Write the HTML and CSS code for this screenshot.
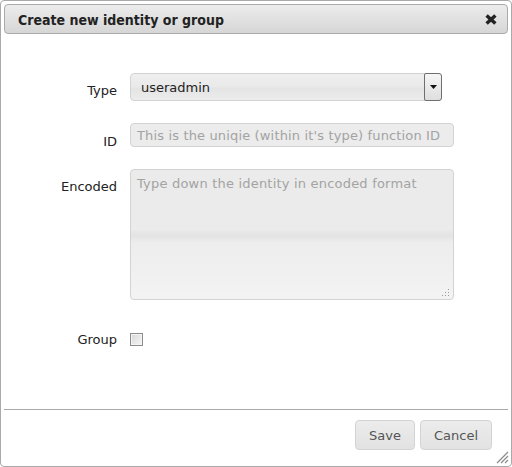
FILE: index.html
```html
<!DOCTYPE html>
<html>
<head>
<meta charset="utf-8">
<link rel="stylesheet" href="styles.css">
</head>
<body>
<div class="dialog">
  <div class="titlebar">
    <span class="title">Create new identity or group</span>
    <span class="close">
      <svg width="12" height="11" viewBox="0 0 12 11"><path d="M1.6 1.4 L10.4 9.6 M10.4 1.4 L1.6 9.6" stroke="#222" stroke-width="3.4" fill="none"/></svg>
    </span>
  </div>
  <div class="content">
    <form class="form">
      <label class="lbl">Type</label>
      <div class="select-wrap">
        <select class="select"><option>useradmin</option></select>
        <span class="select-arrow"><svg width="7" height="4" viewBox="0 0 7 4"><path d="M0 0 H7 L3.5 4 Z" fill="#111"/></svg></span>
      </div>
      <label class="lbl lbl-id">ID</label>
      <input class="field" type="text" placeholder="This is the uniqie (within it's type) function ID">
      <label class="lbl">Encoded</label>
      <div class="area-wrap">
        <textarea class="area" placeholder="Type down the identity in encoded format"></textarea>
        <svg class="grip" width="8" height="8" viewBox="0 0 8 8">
          <rect x="6" y="0" width="1" height="1" fill="#9a9a9a"/>
          <rect x="3" y="3" width="1" height="1" fill="#9a9a9a"/>
          <rect x="6" y="3" width="1" height="1" fill="#9a9a9a"/>
          <rect x="0" y="6" width="1" height="1" fill="#9a9a9a"/>
          <rect x="3" y="6" width="1" height="1" fill="#9a9a9a"/>
          <rect x="6" y="6" width="1" height="1" fill="#9a9a9a"/>
        </svg>
      </div>
      <label class="lbl lbl-group">Group</label>
      <span class="check"></span>
    </form>
  </div>
  <div class="buttonpane">
    <button class="btn" type="button">Save</button>
    <button class="btn" type="button">Cancel</button>
  </div>
  <svg class="resize" width="14" height="14" viewBox="0 0 14 14">
    <path d="M13 2 L2 13 M13 6 L6 13 M13 10 L10 13" stroke="#8a8a8a" stroke-width="1.2" fill="none"/>
  </svg>
</div>
</body>
</html>
```
FILE: styles.css
```css
* { box-sizing: border-box; }
html, body { margin: 0; padding: 0; background: #fff; }
body {
  font-family: "DejaVu Sans", Verdana, sans-serif;
  font-size: 13px;
  color: #222;
}
.dialog {
  position: relative;
  width: 512px;
  height: 467px;
  border: 1px solid #aaa;
  border-radius: 4px;
  padding: 3px;
  display: flex;
  flex-direction: column;
  background: #fff;
}
.titlebar {
  height: 30px;
  flex: 0 0 30px;
  border: 1px solid #aaa;
  border-radius: 4px;
  background: linear-gradient(#ececec, #d6d6d6);
  display: flex;
  align-items: center;
  justify-content: space-between;
  padding: 0 10px 0 13px;
}
.title {
  font-family: "DejaVu Sans Condensed", "DejaVu Sans", sans-serif;
  font-weight: bold;
  font-size: 14px;
  line-height: 16px;
  color: #222;
  padding-top: 1px;
}
.close { display: flex; width: 12px; height: 11px; }
.content { flex: 1 1 auto; }
.form {
  display: grid;
  grid-template-columns: 113px auto;
  column-gap: 13px;
  row-gap: 22px;
  padding-top: 39px;
  align-items: start;
  justify-items: start;
  margin: 0;
}
.lbl {
  justify-self: end;
  line-height: 16px;
  padding-top: 10px;
  margin-bottom: -30px;
  color: #222;
}
.lbl-id { padding-top: 11px; }
.select-wrap { position: relative; width: 312px; height: 28px; }
.select {
  appearance: none;
  -webkit-appearance: none;
  width: 312px;
  height: 28px;
  border: 1px solid #d3d3d3;
  border-radius: 4px;
  background: linear-gradient(#efefef, #e9e9e9 50%, #e4e4e4 55%, #ececec);
  font: 13px "DejaVu Sans", Verdana, sans-serif;
  color: #222;
  padding: 0 0 0 10px;
  margin: 0;
}
.select-arrow {
  position: absolute;
  right: 0;
  top: 0;
  width: 18px;
  height: 28px;
  border: 1px solid #6f6f6f;
  border-radius: 2px 3px 3px 2px;
  background: linear-gradient(#f6f6f6, #dedede);
  display: flex;
  align-items: center;
  justify-content: center;
}
.field {
  width: 324px;
  height: 24px;
  border: 1px solid #d3d3d3;
  border-radius: 4px;
  background: #ececec;
  font: 13px "DejaVu Sans", Verdana, sans-serif;
  letter-spacing: 0.15px;
  padding: 0 6px;
  margin: 0;
  color: #222;
}
.field::placeholder, .area::placeholder { color: #a3a3a3; }
.area-wrap { position: relative; width: 324px; height: 131px; }
.area {
  display: block;
  width: 324px;
  height: 131px;
  border: 1px solid #d3d3d3;
  border-radius: 4px;
  background: linear-gradient(#ebebeb 0%, #ebebeb 46%, #e3e3e3 51%, #ededed 56%, #f3f3f3 100%);
  font: 13px/16px "DejaVu Sans", Verdana, sans-serif;
  letter-spacing: 0.2px;
  padding: 6px 6px;
  margin: 0;
  resize: none;
  color: #222;
}
.grip { position: absolute; right: 4px; bottom: 3px; }
.check {
  margin-top: 11px;
  width: 13px;
  height: 13px;
  border: 1px solid #8c8c8c;
  box-shadow: inset 0 0 0 1px #f4f4f4;
  background: linear-gradient(135deg, #d6d6d6, #f7f7f7);
}
.lbl-group { padding-top: 0; margin-top: 10px; }
.buttonpane {
  flex: 0 0 54px;
  height: 54px;
  border-top: 1px solid #aaa;
  display: flex;
  justify-content: flex-end;
  align-items: flex-start;
  gap: 5px;
  padding: 10px 16px 0 0;
}
.btn {
  height: 30px;
  padding: 0 13px;
  border: 1px solid #d3d3d3;
  border-radius: 4px;
  background: linear-gradient(#ececec, #e2e2e2);
  font: 13px "DejaVu Sans", Verdana, sans-serif;
  color: #555;
  margin: 0;
}
.resize { position: absolute; right: 2px; bottom: 2px; }
```
